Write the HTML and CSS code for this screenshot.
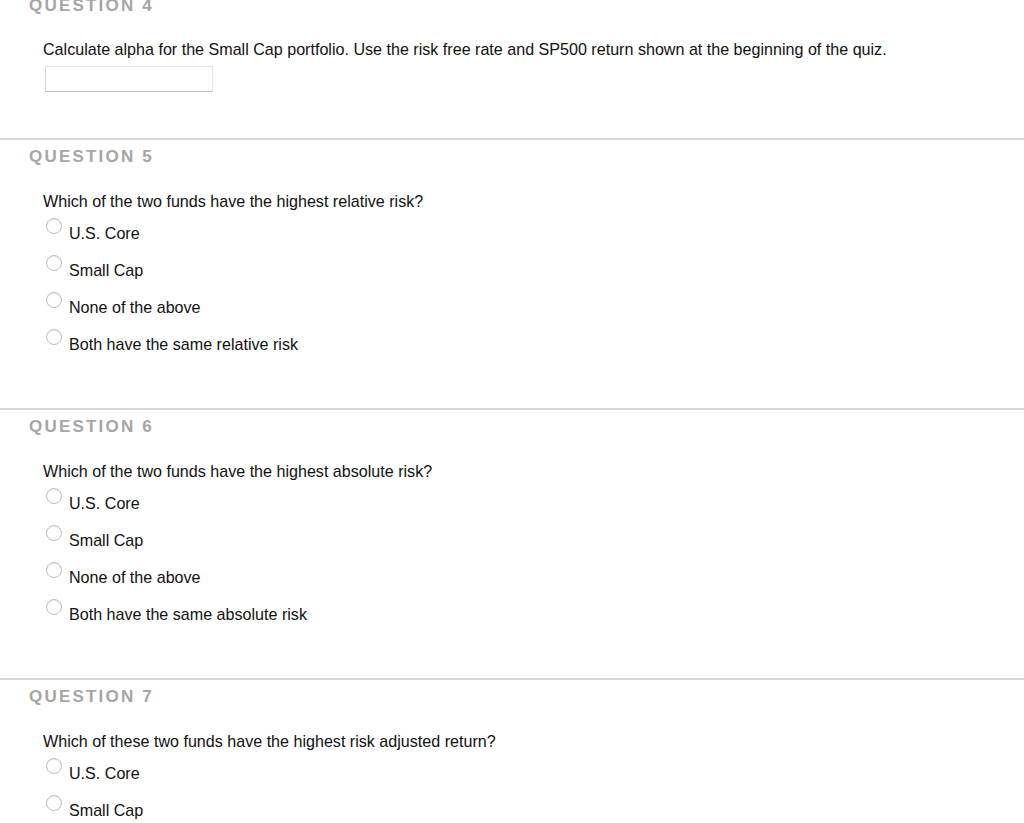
FILE: index.html
```html
<!DOCTYPE html>
<html>
<head>
<meta charset="utf-8">
<link rel="stylesheet" href="styles.css">
</head>
<body>
<section class="q q-first">
  <h2 class="q-head">QUESTION 4</h2>
  <p class="q-text">Calculate alpha for the Small Cap portfolio. Use the risk free rate and SP500 return shown at the beginning of the quiz.</p>
  <div class="answer-box"></div>
</section>
<section class="q">
  <h2 class="q-head">QUESTION 5</h2>
  <p class="q-text">Which of the two funds have the highest relative risk?</p>
  <ul class="opts">
    <li class="opt"><span class="radio"></span><span class="lbl">U.S. Core</span></li>
    <li class="opt"><span class="radio"></span><span class="lbl">Small Cap</span></li>
    <li class="opt"><span class="radio"></span><span class="lbl">None of the above</span></li>
    <li class="opt"><span class="radio"></span><span class="lbl">Both have the same relative risk</span></li>
  </ul>
</section>
<section class="q">
  <h2 class="q-head">QUESTION 6</h2>
  <p class="q-text">Which of the two funds have the highest absolute risk?</p>
  <ul class="opts">
    <li class="opt"><span class="radio"></span><span class="lbl">U.S. Core</span></li>
    <li class="opt"><span class="radio"></span><span class="lbl">Small Cap</span></li>
    <li class="opt"><span class="radio"></span><span class="lbl">None of the above</span></li>
    <li class="opt"><span class="radio"></span><span class="lbl">Both have the same absolute risk</span></li>
  </ul>
</section>
<section class="q">
  <h2 class="q-head">QUESTION 7</h2>
  <p class="q-text">Which of these two funds have the highest risk adjusted return?</p>
  <ul class="opts">
    <li class="opt"><span class="radio"></span><span class="lbl">U.S. Core</span></li>
    <li class="opt"><span class="radio"></span><span class="lbl">Small Cap</span></li>
  </ul>
</section>
</body>
</html>
```

FILE: styles.css
```css
html, body {
  margin: 0;
  padding: 0;
  background: #ffffff;
  font-family: "Liberation Sans", Arial, Helvetica, sans-serif;
  color: #111111;
  overflow: hidden;
}

.q {
  border-top: 2px solid #d8d8d8;
  padding-bottom: 45px;
}

.q-first {
  border-top: none;
  margin-top: -4px;
  padding-bottom: 46px;
}

.q-head {
  margin: 7px 0 0 0;
  padding-left: 29px;
  font-size: 17px;
  line-height: 20px;
  font-weight: bold;
  letter-spacing: 2.2px;
  color: #a5a5a5;
}

.q-first .q-head {
  margin-top: 0;
}

.q-text {
  margin: 24px 0 0 0;
  padding-left: 43px;
  font-size: 16.1px;
  line-height: 20px;
}

.q-first .q-text {
  margin-top: 23px;
}

.answer-box {
  margin: 7px 0 0 45px;
  width: 166px;
  height: 24px;
  border: 1px solid #e2e2e2;
  border-left-color: #d6d6d6;
  border-bottom-color: #bdbdbd;
  background: #fff;
}

.opts {
  list-style: none;
  margin: 4px 0 0 0;
  padding: 0;
}

.opt {
  display: flex;
  align-items: flex-start;
  height: 37px;
  padding-left: 46px;
}

.radio {
  width: 14px;
  height: 14px;
  margin-top: 3px;
  border: 1px solid #bdbdbd;
  border-radius: 50%;
  background: radial-gradient(circle at 50% 60%, #ffffff 55%, #f0f0f0 100%);
  box-shadow: inset 0 1px 1px rgba(0,0,0,0.06);
  flex: none;
}

.lbl {
  margin-left: 7px;
  margin-top: 8px;
  font-size: 16.1px;
  line-height: 20px;
}
```
